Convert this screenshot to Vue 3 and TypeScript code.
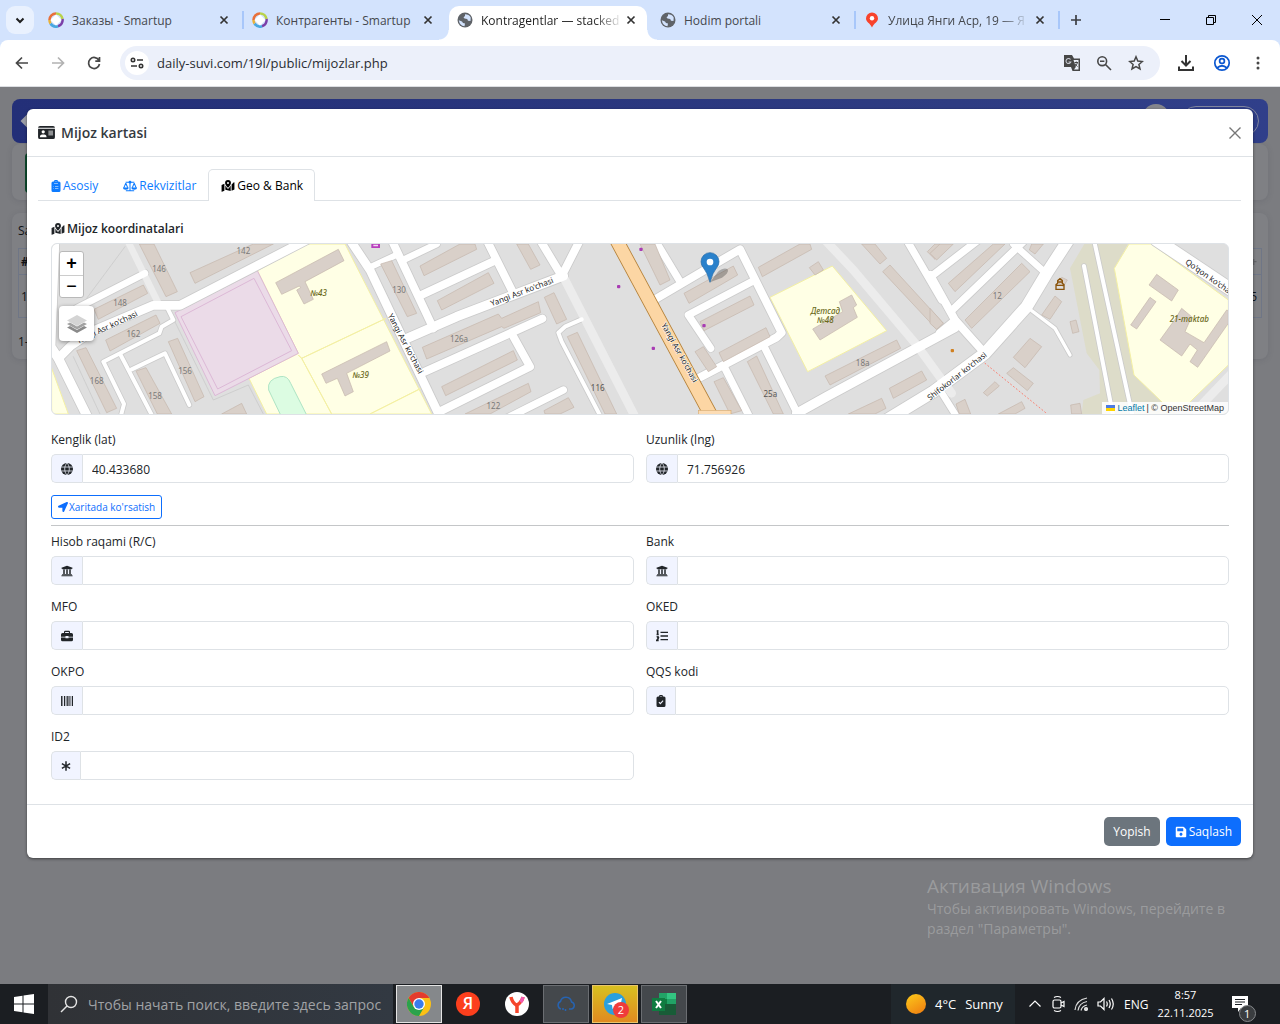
<script setup lang="ts">
import { ref } from 'vue'

interface Icon { w: number; d?: string; cut?: string; line?: string }

const icons: Record<string, Icon> = {
  idCard: { w: 576, d: 'M0 96a64 64 0 0 1 64-64h448a64 64 0 0 1 64 64zM0 128h576v288a64 64 0 0 1-64 64H64a64 64 0 0 1-64-64zM176 176a56 56 0 1 0 0 112a56 56 0 1 0 0-112zM64 416h224a90 90 0 0 0-80-96h-64a90 90 0 0 0-80 96zM352 192v32h160v-32zM352 256v32h160v-32zM352 320v32h160v-32z' },
  clipboardList: { w: 384, d: 'M64 64h48a80 80 0 0 1 160 0h48a64 64 0 0 1 64 64v320a64 64 0 0 1-64 64H64a64 64 0 0 1-64-64V128a64 64 0 0 1 64-64zM192 44a20 20 0 1 0 0 40a20 20 0 1 0 0-40zM110 140v20h164v-20zM84 262v24h24v-24zM150 264v20h144v-20zM84 362v24h24v-24zM150 364v20h144v-20z' },
  scale: { w: 640, d: 'M0 330h256a128 100 0 0 1-256 0zM384 330h256a128 100 0 0 1-256 0zM320 16a64 64 0 1 0 0 128a64 64 0 1 0 0-128z', line: 'M320 90V480M130 474H510M120 84H520M128 130L36 340M128 130L220 340M512 130L420 340M512 130L604 340' },
  mapPin: { w: 576, d: 'M14 216l120-52v290L30 500Q14 506 14 486zM562 100v310L442 462V190l96-90q24-10 24 10zM174 230q50 90 92 134q22 22 44 0q42-44 92-134v240l-228-50zM288 0a126 126 0 0 1 126 126c0 56-82 158-114 196q-12 14-24 0C244 284 162 182 162 126A126 126 0 0 1 288 0zM288 84a42 42 0 1 0 0 84a42 42 0 1 0 0-84z' },
  globe: { w: 512, d: 'M256 0a256 256 0 1 0 0 512a256 256 0 1 0 0-512z', cut: 'M10 172H502M10 340H502M256 0c-130 130-130 382 0 512M256 0c130 130 130 382 0 512' },
  bank: { w: 512, d: 'M496 128v16a8 8 0 0 1-8 8h-24v12c0 6.627-5.373 12-12 12H60c-6.627 0-12-5.373-12-12v-12H24a8 8 0 0 1-8-8v-16a8 8 0 0 1 4.941-7.392l232-88a7.996 7.996 0 0 1 6.118 0l232 88A8 8 0 0 1 496 128zm-24 304H40c-13.255 0-24 10.745-24 24v16a8 8 0 0 0 8 8h464a8 8 0 0 0 8-8v-16c0-13.255-10.745-24-24-24zM96 192v192H60c-6.627 0-12 5.373-12 12v20h416v-20c0-6.627-5.373-12-12-12h-36V192h-64v192h-64V192h-64v192h-64V192H96z' },
  briefcase: { w: 512, d: 'M176 32h160a48 48 0 0 1 48 48v48h64a64 64 0 0 1 64 64v96H320v-32H192v32H0v-96a64 64 0 0 1 64-64h64V80a48 48 0 0 1 48-48zM176 80v48h160V80zM0 320h192v32h128v-32h192v96a64 64 0 0 1-64 64H64a64 64 0 0 1-64-64z' },
  listOl: { w: 512, d: 'M192 72h320v56H192zM192 228h320v56H192zM192 384h320v56H192z', line: 'M30 60L70 40V190M24 194H116M30 310q60-40 76 4q6 30-76 130h84' },
  barcode: { w: 512, d: 'M0 40h40v432H0zM64 40h24v432H64zM128 40h48v432h-48zM208 40h24v432h-24zM264 40h56v432h-56zM352 40h24v432h-24zM408 40h24v432h-24zM464 40h48v432h-48z' },
  clipboardCheck: { w: 384, d: 'M64 64h48a80 80 0 0 1 160 0h48a64 64 0 0 1 64 64v320a64 64 0 0 1-64 64H64a64 64 0 0 1-64-64V128a64 64 0 0 1 64-64zM192 40a24 24 0 1 0 0 48a24 24 0 1 0 0-48z', cut: 'M104 306l60 60 118-124' },
  asterisk: { w: 448, line: 'M224 40V472M40 150L408 362M408 150L40 362' },
  arrow: { w: 512, d: 'M444.52 3.52L28.74 195.42c-47.97 22.39-31.98 92.75 19.19 92.75h175.91v175.91c0 51.17 70.36 67.17 92.75 19.19l191.9-415.78c15.99-38.39-25.59-79.97-63.97-63.97z' },
  save: { w: 448, d: 'M433.941 129.941l-83.882-83.882A48 48 0 0 0 316.118 32H48C21.49 32 0 53.49 0 80v352c0 26.51 21.49 48 48 48h352c26.51 0 48-21.49 48-48V163.882a48 48 0 0 0-14.059-33.941zM224 416c-35.346 0-64-28.654-64-64 0-35.346 28.654-64 64-64s64 28.654 64 64c0 35.346-28.654 64-64 64zm96-304.52V212c0 6.627-5.373 12-12 12H76c-6.627 0-12-5.373-12-12V108c0-6.627 5.373-12 12-12h228.52c3.183 0 6.235 1.264 8.485 3.515l3.48 3.48A11.996 11.996 0 0 1 320 111.48z' },
}

const browserTabs = [
  { title: 'Заказы - Smartup', icon: 'ring', active: false, sep: true },
  { title: 'Контрагенты - Smartup', icon: 'ring', active: false, sep: false },
  { title: 'Kontragentlar — stacked', icon: 'world', active: true, sep: false },
  { title: 'Hodim portali', icon: 'world', active: false, sep: true },
  { title: 'Улица Янги Аср, 19 — Я', icon: 'pin', active: false, sep: true },
]

const cardTabs = [
  { key: 'main', label: 'Asosiy', icon: 'clipboardList' },
  { key: 'req', label: 'Rekvizitlar', icon: 'scale' },
  { key: 'geo', label: 'Geo & Bank', icon: 'mapPin' },
]
const currentTab = ref('geo')

const coords = ref([
  { id: 'lat', label: 'Kenglik (lat)', icon: 'globe', value: '40.433680' },
  { id: 'lng', label: 'Uzunlik (lng)', icon: 'globe', value: '71.756926' },
])
const bankFields = ref([
  { id: 'account', label: 'Hisob raqami (R/C)', icon: 'bank', value: '' },
  { id: 'bank', label: 'Bank', icon: 'bank', value: '' },
  { id: 'mfo', label: 'MFO', icon: 'briefcase', value: '' },
  { id: 'oked', label: 'OKED', icon: 'listOl', value: '' },
  { id: 'okpo', label: 'OKPO', icon: 'barcode', value: '' },
  { id: 'qqs', label: 'QQS kodi', icon: 'clipboardCheck', value: '' },
  { id: 'id2', label: 'ID2', icon: 'asterisk', value: '' },
])

/* Map tiles: every tile keeps its own origin; one pixel is three units. */
interface Road { p: string; w: number; kind?: string }
interface Label { t: string; x: number; y: number; r?: number; kind?: string }
interface Tile {
  dx: number
  areas: { p: string; kind: string }[]
  roads: Road[]
  houses: string[]
  labels: Label[]
  dots: { x: number; y: number; kind?: string }[]
}
const street = "Yangi Asr ko'chasi"
const tiles: Tile[] = [
  {
    dx: -6,
    areas: [
      { p: '622,92 770,12 885,12 1145,522 650,522 597,415 745,340', kind: 'school' },
      { p: '5,385 55,522 5,522', kind: 'school' },
      { p: '745,345 755,355 1008,235 755,355 845,522 755,355', kind: 'school' },
      { p: '960,522 1112,445 1112,446', kind: 'school' },
      { p: '375,218 622,92 745,340 495,467', kind: 'court' },
      { p: '393,230 612,115 725,332 503,447', kind: 'court' },
    ],
    roads: [
      { p: '225,20 110,175', w: 1, kind: 'thin' },
      { p: '360,215 490,480 595,435 640,522', w: 1, kind: 'thin' },
      { p: '70,350 150,522', w: 1, kind: 'thin' },
      { p: '232,0 325,190', w: 20, kind: 'path' },
      { p: '14,0 2,320 25,355 112,530', w: 28 },
      { p: '25,355 62,318 130,272 310,196 390,196 770,0', w: 26 },
      { p: '80,205 285,100', w: 20 },
      { p: '350,200 370,240 335,260 328,280 160,365 222,492 212,530', w: 12 },
      { p: '212,345 308,530', w: 12 },
      { p: '245,388 345,340 418,495', w: 12 },
    ],
    houses: [
      '268,12 312,12 382,155 348,170', '420,98 610,12 670,12 435,130', '132,208 280,135 293,160 145,238',
      '167,300 318,225 330,250 180,333', '80,332 108,323 200,505 170,518', '258,393 288,383 365,522 322,522',
      '355,305 383,295 462,470 435,485', '515,522 575,490 590,522',
      '677,128 865,28 882,62 765,125 790,178 762,192 740,150 752,143 748,138 695,163',
      '815,402 1010,305 1020,333 890,400 910,455 885,468 862,415 828,430',
    ],
    labels: [
      { t: '146', x: 327, y: 87 }, { t: '142', x: 580, y: 33 }, { t: '148', x: 210, y: 188 }, { t: '162', x: 250, y: 280 },
      { t: '168', x: 140, y: 423 }, { t: '158', x: 315, y: 466 }, { t: '156', x: 405, y: 392 },
      { t: '№43', x: 806, y: 158, kind: 'place' }, { t: '№39', x: 932, y: 403, kind: 'place' },
      { t: street, x: 170, y: 260, r: -25, kind: 'street' },
    ],
    dots: [],
  },
  {
    dx: 894,
    areas: [],
    roads: [
      { p: '640,110 855,530', w: 26, kind: 'path' },
      { p: '0,0 60,90 265,520', w: 26 },
      { p: '60,82 145,42', w: 18 },
      { p: '125,0 250,265', w: 24 },
      { p: '155,62 260,12', w: 20 },
      { p: '210,167 435,62', w: 24 },
      { p: '410,0 490,160', w: 24 },
      { p: '165,298 320,230 640,108', w: 28 },
      { p: '570,0 635,108 690,0', w: 24 },
      { p: '225,395 577,236', w: 24 },
      { p: '490,290 540,380 275,512', w: 24 },
      { p: '460,540 640,450', w: 22 },
      { p: '695,238 645,260 625,278 635,305 752,530', w: 12 },
    ],
    houses: [
      '92,72 125,62 200,220 172,230', '210,78 330,12 375,12 380,28 222,107', '262,182 415,98 432,130 275,210',
      '500,12 535,12 570,75 542,88', '217,322 445,222 455,235 565,185 572,218 462,265 455,260 230,357',
      '583,172 612,158 650,238 620,252', '275,440 490,332 502,360 287,467', '345,522 535,430 543,455 420,522',
      '652,290 682,277 800,522 765,522', '582,512 655,473 672,502 630,522 585,522',
    ],
    labels: [
      { t: '130', x: 147, y: 150 }, { t: '126a', x: 327, y: 296 }, { t: '122', x: 430, y: 496 }, { t: '116', x: 743, y: 442, kind: 'dark' },
      { t: street, x: 515, y: 154, r: -21, kind: 'street' }, { t: street, x: 168, y: 310, r: 62, kind: 'street' },
    ],
    dots: [{ x: 806, y: 140 }],
  },
  {
    dx: 1764,
    areas: [{ p: '390,172 577,78 740,272 503,395', kind: 'school' }],
    roads: [
      { p: '555,0 640,90 830,315 935,460', w: 26, kind: 'path' },
      { p: '45,0 122,128', w: 22 },
      { p: '50,175 300,28 425,278 410,292 180,412', w: 24 },
      { p: '345,120 145,225 212,325', w: 22 },
      { p: '375,325 472,520', w: 22 },
      { p: '255,385 328,530', w: 22 },
      { p: '800,0 905,180', w: 22 },
      { p: '470,520 560,470 945,262', w: 28 },
      { p: '-77,-12 215,530', w: 38, kind: 'main' },
    ],
    houses: [
      '0,12 45,12 90,120 60,135', '132,160 280,78 293,105 147,190', '180,245 330,168 342,195 192,272',
      '237,338 378,263 390,290 250,365', '165,335 190,320 230,380 205,395', '222,425 250,413 305,512 270,522',
      '322,365 350,348 430,522 400,522', '355,82 480,12 510,12 515,28 367,110', '508,83 535,65 550,90 525,105',
      '518,267 608,215 598,185 635,165 650,195 640,203 652,232 540,300', '555,408 770,300 782,325 570,435',
      '748,445 845,393 860,420 760,475', '625,522 725,475 738,505 705,522', '665,12 705,12 740,55 720,72',
      '728,95 750,75 910,250 890,268', '862,35 885,12 920,12 885,58',
    ],
    labels: [
      { t: 'Детсад', x: 556, y: 213, kind: 'place' }, { t: '№48', x: 556, y: 240, kind: 'place' },
      { t: '18a', x: 668, y: 368 }, { t: '25a', x: 391, y: 461, kind: 'dark' },
      { t: street, x: 120, y: 337, r: 61, kind: 'street' },
    ],
    dots: [{ x: 3, y: 28 }, { x: 192, y: 257 }, { x: 40, y: 325 }],
  },
  {
    dx: 2634,
    areas: [
      { p: '470,0 600,0 555,85 612,405 740,522 455,522 460,480 510,460 508,390 470,340 420,85', kind: 'grass' },
      { p: '597,12 665,12 895,180 895,375 760,505 700,490 612,405 553,85', kind: 'school' },
    ],
    roads: [
      { p: '165,370 352,522', w: 2, kind: 'foot' },
      { p: '800,510 905,400', w: 26, kind: 'path' },
      { p: '462,78 550,530', w: 12 },
      { p: '492,0 608,530', w: 12 },
      { p: '0,112 145,0', w: 22 },
      { p: '65,212 280,5', w: 22 },
      { p: '250,12 350,102', w: 20 },
      { p: '0,105 75,240 160,335', w: 24 },
      { p: '75,243 30,280', w: 26 },
      { p: '305,212 375,265 420,345', w: 10 },
      { p: '30,450 80,530', w: 20 },
      { p: '-130,540 10,455 165,340 290,200 350,100 415,0', w: 36 },
      { p: '680,0 920,160', w: 38 },
    ],
    houses: [
      '0,40 30,12 70,12 20,60', '55,130 190,12 225,12 75,155', '305,12 340,12 315,42 298,30', '105,240 275,70 300,95 125,265',
      '335,225 375,168 395,185 360,238', '395,112 412,120 400,140 388,132', '420,245 438,240 447,275 428,280',
      '250,352 300,295 335,320 285,383', '230,400 250,383 310,430 292,452', '160,458 195,425 208,438 172,468',
      '78,492 105,478 122,522 88,522', '205,522 275,485 285,505 255,522', '422,495 450,490 455,522 425,522',
      '657,135 680,103 745,150 725,183', '602,255 660,172 678,185 620,267',
      '690,300 735,238 755,205 785,230 765,275 822,308 890,210 895,212 895,250 803,382 780,365 802,330 780,312 755,348',
      '0,205 40,250 20,268 0,250',
    ],
    labels: [
      { t: '12', x: 202, y: 168 }, { t: '21-maktab', x: 778, y: 237, kind: 'place' },
      { t: "Shifokorlar ko'chasi", x: 80, y: 407, r: -38, kind: 'street' }, { t: "Qo'qon ko'chasi", x: 842, y: 112, r: 35, kind: 'street' },
    ],
    dots: [{ x: 67, y: 332, kind: 'orange' }],
  },
]
</script>

<template>
  <div class="screen">
    <header class="tabstrip">
      <button class="tab-search" aria-label="Search tabs">
        <svg width="12" height="12" viewBox="0 0 12 12"><path d="M2.500 4.500L6 8l3.500-3.500" fill="none" stroke="#1f1f1f" stroke-width="2" /></svg>
      </button>
      <div v-for="t in browserTabs" :key="t.title" class="btab" :class="{ active: t.active, sep: t.sep }">
        <svg v-if="t.icon === 'ring'" class="fav" viewBox="0 0 16 16" fill="none" stroke-width="2.600">
          <path d="M1.500 8A6.500 6.500 0 0 1 8 1.500" stroke="#e8703a" /><path d="M8 1.500A6.500 6.500 0 0 1 14.500 7" stroke="#b9d24a" /><path d="M14.500 7A6.500 6.500 0 0 1 10 14.200" stroke="#7b3fa8" /><path d="M10 14.200A6.500 6.500 0 0 1 2.500 11.500" stroke="#4aa8e0" /><path d="M2.500 11.500A6.500 6.500 0 0 1 1.500 8" stroke="#e8b13a" />
          <path d="M8 2.500L13.500 8L8 13.500L2.500 8Z" fill="#fff" />
        </svg>
        <svg v-else-if="t.icon === 'world'" class="fav" viewBox="0 0 16 16">
          <circle cx="8" cy="8" r="7.500" fill="#5f6368" />
          <path d="M1.800 8.300l3.200 1.200 1 1.500 2 .5-.5 2.800q-4.800-.4-5.700-6zM8 2.200q4 0 5.700 3.300l-.2 3.500-2.500-.2-.8-1.800-2.700-.4-1-1.300 1.500-1.200z" fill="#d3e3fd" />
        </svg>
        <svg v-else class="fav" viewBox="0 0 16 16"><path d="M8 .500a6 6 0 0 1 6 6c0 3.500-4 4.500-6 9c-2-4.500-6-5.500-6-9a6 6 0 0 1 6-6z" fill="#f8432c" /><circle cx="8" cy="6.300" r="2.200" fill="#fff" /></svg>
        <span class="btitle" :class="{ fade: t.title.length > 21 }">{{ t.title }}</span>
        <button class="bclose" aria-label="Close tab"><svg width="10" height="10" viewBox="0 0 10 10"><path d="M1.500 1.500l7 7M8.500 1.500l-7 7" stroke="#333" stroke-width="1.700" /></svg></button>
      </div>
      <button class="plain" aria-label="New tab"><svg width="12" height="12" viewBox="0 0 12 12"><path d="M6 1v10M1 6h10" stroke="#3c3f43" stroke-width="1.700" /></svg></button>
      <div class="winctl">
        <button aria-label="Minimize"><svg width="12" height="12" viewBox="0 0 12 12"><path d="M1 5.500h10" stroke="#000" /></svg></button>
        <button aria-label="Restore"><svg width="12" height="12" viewBox="0 0 12 12" fill="none" stroke="#000"><path d="M1.500 3.500h7v7h-7zM3.500 3.500v-2h7v7h-2" /></svg></button>
        <button aria-label="Close"><svg width="12" height="12" viewBox="0 0 12 12"><path d="M1 1l10 10M11 1L1 11" stroke="#000" /></svg></button>
      </div>
    </header>

    <div class="toolbar">
      <button class="tool" aria-label="Back"><svg width="16" height="16" viewBox="0 0 16 16" fill="none" stroke="#474747" stroke-width="1.700"><path d="M14 8H3M8 2.500L2.500 8L8 13.500" /></svg></button>
      <button class="tool" aria-label="Forward"><svg width="16" height="16" viewBox="0 0 16 16" fill="none" stroke="#b2b2b2" stroke-width="1.700"><path d="M2 8h11M8 2.500L13.500 8L8 13.500" /></svg></button>
      <button class="tool" aria-label="Reload"><svg width="16" height="16" viewBox="0 0 16 16" fill="none" stroke="#474747" stroke-width="1.700"><path d="M13 5.500A5.500 5.500 0 1 0 13.500 9M13.500 2v4.200H9.300" /></svg></button>
      <div class="omnibox">
        <button class="site" aria-label="Site information"><svg width="14" height="12" viewBox="0 0 14 12" fill="none" stroke="#333" stroke-width="1.600"><circle cx="3" cy="3" r="1.700" /><path d="M7 3h6M1 9h6" /><circle cx="11" cy="9" r="1.700" /></svg></button>
        <input class="url" aria-label="Address" value="daily-suvi.com/19l/public/mijozlar.php" />
        <button class="otool" aria-label="Translate"><svg width="18" height="18" viewBox="0 0 18 18"><path d="M1 1h8l2 3.500h6V17H9.500L8 13H1z" fill="#474747" /><path d="M10.500 6H15.500V15.500H11L12.800 13z" fill="#edf1fa" /><path d="M7.500 5.500a2.500 2.500 0 1 0 .3 2.500H5.500" fill="none" stroke="#c9ccd4" stroke-width="1.100" /><path d="M11.500 8.500h3.500M13.300 7.500v1M14.500 8.500q-.5 2.500-2.700 4M12 9.500q1 2 2.500 3" fill="none" stroke="#474747" /></svg></button>
        <button class="otool" aria-label="Zoom"><svg width="16" height="16" viewBox="0 0 16 16" fill="none" stroke="#474747" stroke-width="1.600"><circle cx="6.200" cy="6.200" r="4.400" /><path d="M9.500 9.500L15 15M4 6.200h4.400" /></svg></button>
        <button class="otool" aria-label="Bookmark"><svg width="16" height="16" viewBox="0 0 16 16" fill="none" stroke="#474747" stroke-width="1.500"><path d="M8 1.800l1.800 4.300 4.600.4-3.500 3 1.100 4.500L8 11.600 4 14l1.100-4.500-3.500-3 4.600-.4z" /></svg></button>
      </div>
      <button class="tool" aria-label="Downloads"><svg width="18" height="18" viewBox="0 0 18 18" fill="none" stroke="#333" stroke-width="2"><path d="M9 1v10M4.500 7L9 11.500L13.500 7M2 12.500V16h14v-3.500" /></svg></button>
      <button class="tool" aria-label="Profile"><svg width="18" height="18" viewBox="0 0 18 18" fill="none" stroke="#0b57d0" stroke-width="1.700"><circle cx="9" cy="9" r="7.200" /><circle cx="9" cy="7" r="2.400" /><path d="M4 14q5-4.500 10 0" /></svg></button>
      <button class="tool" aria-label="Menu"><svg width="4" height="16" viewBox="0 0 4 16" fill="#474747"><circle cx="2" cy="3" r="1.500" /><circle cx="2" cy="8" r="1.500" /><circle cx="2" cy="13" r="1.500" /></svg></button>
    </div>

    <main class="page">
      <div class="behind" aria-hidden="true">
        <div class="appbar"><span class="diamond"></span><span class="ava"></span><span class="pill"></span></div>
        <div class="pcard first"><span class="green"></span></div>
        <div class="pcard second">
          <p>Sa</p>
          <div class="grid"><div class="r head"><span>#</span><span>+</span></div><div class="r"><span>1</span><span>5</span></div></div>
          <p class="count">1-</p>
        </div>
      </div>

      <section class="modal" role="dialog" aria-labelledby="card-title">
        <header class="mhead">
          <svg class="ic big" :viewBox="`0 0 ${icons.idCard.w} 512`"><path fill-rule="evenodd" :d="icons.idCard.d" /></svg>
          <h1 id="card-title">Mijoz kartasi</h1>
          <button class="mclose" aria-label="Close"><svg width="12" height="12" viewBox="0 0 12 12"><path d="M.500 .500l11 11M11.500 .500l-11 11" stroke="#777" stroke-width="1.400" /></svg></button>
        </header>

        <div class="mbody">
          <nav class="tabs" role="tablist">
            <button v-for="t in cardTabs" :key="t.key" class="tab" :class="{ on: t.key === currentTab }" role="tab" :aria-selected="t.key === currentTab" @click="currentTab = t.key">
              <svg class="ic" :viewBox="`0 0 ${icons[t.icon].w} 512`" :class="{ slim: icons[t.icon].w < 448, wide: icons[t.icon].w > 512 }"><path fill-rule="evenodd" :d="icons[t.icon].d" /><path v-if="icons[t.icon].line" class="line thin" :d="icons[t.icon].line" /></svg>
              <span>{{ t.label }}</span>
            </button>
          </nav>

          <div class="pane">
            <h2><svg class="ic wide" viewBox="0 0 576 512"><path fill-rule="evenodd" :d="icons.mapPin.d" /></svg>Mijoz koordinatalari</h2>
            <div class="map">
              <svg class="mapart" viewBox="0 0 3528 510" preserveAspectRatio="xMidYMid slice">
                <g v-for="t in tiles" :key="'a' + t.dx" :transform="`translate(${t.dx} -12)`">
                  <polygon v-for="a in t.areas" :key="a.p" :points="a.p" :class="a.kind" />
                </g>
                <path transform="translate(-6 -12)" class="pitch" d="M692 525L656 450Q650 418 690 410Q712 405 722 430L770 525z" />
                <g v-for="t in tiles" :key="'c' + t.dx" :transform="`translate(${t.dx} -12)`">
                  <polyline v-for="r in t.roads.filter((x) => !x.kind)" :key="r.p" :points="r.p" class="casing" :stroke-width="r.w + 5" />
                </g>
                <g v-for="t in tiles" :key="'r' + t.dx" :transform="`translate(${t.dx} -12)`">
                  <polyline v-for="r in t.roads.filter((x) => x.kind !== 'main')" :key="r.p" :points="r.p" class="road" :class="r.kind" :stroke-width="r.w" />
                </g>
                <g v-for="t in tiles" :key="'h' + t.dx" :transform="`translate(${t.dx} -12)`">
                  <polygon v-for="h in t.houses" :key="h" :points="h" class="house" />
                  <template v-for="r in t.roads" :key="r.p">
                    <polyline v-if="r.kind === 'main'" :points="r.p" class="main-casing" :stroke-width="r.w + 5" />
                    <polyline v-if="r.kind === 'main'" :points="r.p" class="main" :stroke-width="r.w" />
                  </template>
                  <rect v-for="d in t.dots" :key="d.x" :x="d.x - 5" :y="d.y - 5" width="10" height="10" rx="3" class="dot" :class="d.kind" />
                </g>
                <rect x="1939" y="499" width="98" height="14" fill="#fcdcb4" stroke="#d8ad74" stroke-width="2" />
                <path d="M958 0h26v12h-26z" fill="#b83fbd" /><path d="M964 2h14v5h-14z" fill="#f3d7f4" />
                <path d="M3012 136v-14l5-4v-8l7-6 7 6v8l5 4v14z" fill="none" stroke="#8a540c" stroke-width="4" /><path d="M3012 124h24M3018 114h12" stroke="#8a540c" stroke-width="4" />
                <g v-for="t in tiles" :key="'l' + t.dx" :transform="`translate(${t.dx} -12)`">
                  <text v-for="l in t.labels" :key="l.t + l.x" :class="l.kind" :transform="`translate(${l.x} ${l.y}) rotate(${l.r || 0})`" dy="10">{{ l.t }}</text>
                </g>
                <g transform="translate(1974 115)">
                  <path d="M0 0L24-32Q44-48 54-38Q56-28 36-14z" fill="#000" opacity=".25" />
                  <path d="M0 0Q-8-30-20-44A27 27 0 0 1-27-62A27 27 0 0 1 27-62A27 27 0 0 1 20-44Q8-30 0 0z" fill="#2a81cb" stroke="#2268a5" stroke-width="2" /><circle cy="-61" r="10" fill="#fff" />
                </g>
              </svg>
              <div class="zoom"><button aria-label="Zoom in">+</button><button aria-label="Zoom out">−</button></div>
              <button class="layers" aria-label="Layers">
                <svg width="22" height="22" viewBox="0 0 22 22"><path d="M1 14.500l10 5.500 10-5.500-3-1.500-7 4-7-4z" fill="#8a8a8a" /><path d="M1 11l10 5.500L21 11l-3-1.500-7 4-7-4z" fill="#a2a2a2" /><path d="M1 7.500L11 2l10 5.500L11 13z" fill="#d4d4d4" /></svg>
              </button>
              <div class="credit">
                <svg width="9" height="6" viewBox="0 0 9 6"><path d="M0 0h9v3H0z" fill="#4c7be1" /><path d="M0 3h9v3H0z" fill="#ffd500" /></svg>
                <a href="#">Leaflet</a><span>| © OpenStreetMap</span>
              </div>
            </div>

            <div class="fields geo">
              <div v-for="f in coords" :key="f.id" class="field">
                <label :for="f.id">{{ f.label }}</label>
                <div class="group">
                  <span class="addon"><svg class="ic" viewBox="0 0 512 512"><path :d="icons.globe.d" /><path class="cut" :d="icons.globe.cut" /></svg></span>
                  <input :id="f.id" v-model="f.value" type="text" />
                </div>
              </div>
            </div>
            <button class="show"><svg class="ic" viewBox="0 0 512 512"><path :d="icons.arrow.d" /></svg>Xaritada ko'rsatish</button>
            <hr />
            <div class="fields">
              <div v-for="f in bankFields" :key="f.id" class="field">
                <label :for="f.id">{{ f.label }}</label>
                <div class="group">
                  <span class="addon">
                    <svg class="ic" :class="{ slim: icons[f.icon].w < 512 }" :viewBox="`0 0 ${icons[f.icon].w} 512`">
                      <path v-if="icons[f.icon].d" fill-rule="evenodd" :d="icons[f.icon].d" />
                      <path v-if="icons[f.icon].cut" class="cut fat" :d="icons[f.icon].cut" />
                      <path v-if="icons[f.icon].line" class="line" :d="icons[f.icon].line" />
                    </svg>
                  </span>
                  <input :id="f.id" v-model="f.value" type="text" />
                </div>
              </div>
            </div>
          </div>
        </div>

        <footer class="mfoot">
          <button class="btn gray">Yopish</button>
          <button class="btn blue"><svg class="ic" viewBox="0 0 448 512"><path :d="icons.save.d" /></svg>Saqlash</button>
        </footer>
      </section>

      <div class="watermark"><strong>Активация Windows</strong><span>Чтобы активировать Windows, перейдите в<br />раздел "Параметры".</span></div>
    </main>

    <footer class="taskbar">
      <button class="start" aria-label="Start"><svg width="20" height="20" viewBox="0 0 20 20" fill="#fff"><path d="M0 3l8.500-1.200v7.700H0zM9.500 1.600L20 0v9.500H9.500zM0 10.500h8.500v7.700L0 17zM9.500 10.500H20V20L9.500 18.400z" /></svg></button>
      <div class="search">
        <svg width="18" height="18" viewBox="0 0 18 18" fill="none" stroke="#e4e4e4" stroke-width="1.400"><circle cx="11" cy="7" r="5.500" /><path d="M7 11L1 17" /></svg>
        <input aria-label="Поиск" placeholder="Чтобы начать поиск, введите здесь запрос" />
      </div>
      <div class="apps">
        <button class="app current" aria-label="Chrome">
          <svg width="24" height="24" viewBox="0 0 24 24"><circle cx="12" cy="12" r="12" fill="#fbc116" /><path d="M1.600 6A12 12 0 0 1 22.400 6H12L7 15z" fill="#e33b2e" /><path d="M1.600 6A12 12 0 0 0 12 24L17.200 15 12 17 6.800 15z" fill="#2ba24c" /><circle cx="12" cy="12" r="6" fill="#fff" /><circle cx="12" cy="12" r="4.700" fill="#3a7cec" /></svg>
        </button>
        <button class="app" aria-label="Yandex"><span class="round red">Я</span></button>
        <button class="app" aria-label="Yandex Browser"><svg width="24" height="24" viewBox="0 0 24 24" fill="none" stroke-width="3.500"><circle cx="12" cy="12" r="12" fill="#fff" /><path d="M6 5q1 5.500 6 8.500" stroke="#f5452c" /><path d="M18 5q-1 5-6 8v8" stroke="#f5452c" /><path d="M18 5q-.5 3-2.500 5" stroke="#f25bb0" /></svg></button>
        <button class="app open" aria-label="Cloud"><svg width="20" height="18" viewBox="0 0 20 18" fill="none" stroke="#2763b0" stroke-width="1.500"><path d="M5 14a4 4 0 0 1-.5-7.500A5.600 5.600 0 0 1 15.500 7A3.600 3.600 0 0 1 15.500 14H13M6 14h2M9.500 14v2" /></svg></button>
        <button class="app alert" aria-label="Telegram">
          <svg width="24" height="24" viewBox="0 0 24 24"><circle cx="12" cy="12" r="11" fill="#2ba0dc" /><path d="M4 12L19 6l-2.500 12-4.500-3.500-2.500 2.500-.5-4z" fill="#fff" /></svg>
          <span class="badge">2</span>
        </button>
        <button class="app open" aria-label="Excel"><svg width="24" height="24" viewBox="0 0 24 24"><path d="M7 1h8v6H7z" fill="#21a366" /><path d="M15 1h9v6h-9z" fill="#33c481" /><path d="M7 7h8v10H7z" fill="#107c41" /><path d="M15 7h9v5h-9z" fill="#21a366" /><path d="M7 12h17v11H7z" fill="#185c37" /><path d="M0 6h13v13H0z" fill="#107c41" /><path d="M4 9l5 7M9 9l-5 7" stroke="#fff" stroke-width="2" /></svg></button>
      </div>
      <div class="weather"><span class="sun"></span><span>4°C</span><span>Sunny</span></div>
      <div class="tray">
        <svg width="14" height="10" viewBox="0 0 14 10" fill="none" stroke="#fff" stroke-width="1.200"><path d="M1.500 7.500L7 2l5.500 5.500" /></svg>
        <svg width="14" height="18" viewBox="0 0 14 18" fill="none" stroke="#fff" stroke-width="1.200"><rect x="2" y="5" width="8" height="8" rx="1.500" /><path d="M10 8l3-1.500v5L10 10M3 2.500q3.500-2 7 0M3 15.500q3.500 2 7 0" /></svg>
        <svg width="14" height="14" viewBox="0 0 14 14" fill="none" stroke="#ddd" stroke-width="1.200"><path d="M1 13Q2 3 13 1M4 13.500Q5 6 13 4.500M7 13.500Q8 9 13 8" /><circle cx="12" cy="12" r="1.500" fill="#ddd" /></svg>
        <svg width="18" height="14" viewBox="0 0 18 14" fill="none" stroke="#fff" stroke-width="1.200"><path d="M1 5h2.500L7 1.500v11L3.500 9H1zM9.500 4.500q1.500 2.500 0 5M12 3q2.500 4 0 8M14.500 1.500q3.500 5.500 0 11" /></svg>
        <span class="lang">ENG</span>
        <time class="clock">8:57<br />22.11.2025</time>
        <span class="note"><svg width="18" height="18" viewBox="0 0 18 18"><path d="M1 1h16v12H10l-3 4v-4H1z" fill="#fff" /><path d="M4 4.500h10M4 7h10M4 9.500h7" stroke="#1b1e22" /></svg><span class="count1">1</span></span>
      </div>
    </footer>
  </div>
</template>

<style>
body { margin: 0; }
</style>

<style scoped>
* { box-sizing: border-box; }
.screen { min-height: 100vh; display: flex; flex-direction: column; font-family: "Open Sans", "Noto Sans", sans-serif; font-size: 12px; color: #212529; }
button { font: inherit; color: inherit; border: 0; background: none; padding: 0; display: flex; align-items: center; justify-content: center; }
input { font: inherit; color: inherit; min-width: 0; outline: 0; }
h1, h2, p { margin: 0; }

.tabstrip { height: 40px; background: #d3e3fd; display: flex; align-items: center; padding-left: 6px; position: relative; z-index: 1; }
.tab-search { width: 28px; height: 28px; border-radius: 9px; background: #e9f1fe; margin-right: 6px; flex: none; }
.btab { flex: 0 1 204px; min-width: 0; height: 28px; display: flex; align-items: center; padding: 0 10px 0 8px; border-right: 2px solid transparent; }
.btab.sep { border-image: linear-gradient(#d3e3fd 6px, #a8c7fa 6px, #a8c7fa 22px, #d3e3fd 22px) 1; border-width: 0 2px 0 0; border-style: solid; }
.btab.active { position: relative; height: 34px; align-self: flex-end; background: #fff; border-radius: 10px 10px 0 0; padding: 0 8px 6px; border-right: 0; margin-left: 1px; margin-right: 5px; flex-basis: 198px; }
.btab.active::before, .btab.active::after { content: ""; position: absolute; bottom: 0; width: 10px; height: 10px; }
.btab.active::before { left: -10px; background: radial-gradient(circle at 0 0, #d3e3fd 9px, #fff 10px); }
.btab.active::after { right: -10px; background: radial-gradient(circle at 100% 0, #d3e3fd 9px, #fff 10px); }
.fav { width: 16px; height: 16px; flex: none; margin-right: 8px; }
.btitle { flex: 1; min-width: 0; overflow: hidden; white-space: nowrap; color: #45484d; }
.btitle.fade { -webkit-mask-image: linear-gradient(90deg, #000 112px, transparent 142px); mask-image: linear-gradient(90deg, #000 112px, transparent 142px); }
.active .btitle { color: #1f1f1f; }
.bclose { width: 16px; height: 16px; flex: none; }
.plain { width: 32px; height: 28px; flex: none; }
.winctl { margin-left: auto; display: flex; flex: none; align-self: stretch; }
.winctl button { width: 46px; }

.toolbar { height: 47px; background: #fff; border-bottom: 1px solid #dcdee2; display: flex; align-items: center; padding: 0 4px; border-radius: 8px 8px 0 0; box-shadow: 0 -10px 0 #d3e3fd; position: relative; }
.tool { width: 36px; height: 36px; flex: none; }
.omnibox { flex: 1; min-width: 0; height: 34px; margin: 0 8px; border-radius: 17px; background: #ecf0fa; display: flex; align-items: center; padding: 0 8px 0 5px; }
.site { width: 24px; height: 24px; border-radius: 50%; background: #fff; flex: none; margin-right: 8px; }
.url { flex: 1; border: 0; background: none; padding: 0; font-size: 13px; color: #2a2d32; }
.otool { width: 32px; height: 28px; flex: none; }

.page { flex: 1; position: relative; background: #7b7c80; padding: 22px 27px 126px; overflow: hidden; }
.behind { position: absolute; inset: 12px 12px auto; }
.appbar { height: 44px; border-radius: 8px; background: linear-gradient(90deg, #232f78, #2e3c82 75%, #303f8a); display: flex; align-items: center; padding: 0 9px 0 11px; }
.diamond { width: 12px; height: 12px; background: #9b9da6; transform: rotate(45deg); }
.ava { width: 30px; height: 34px; border-radius: 50%; background: #85868c; margin-left: auto; margin-right: 10px; }
.pill { width: 78px; height: 30px; border: 1px solid #80859e; border-radius: 15px; }
.pcard { background: #7f8084; border-radius: 8px; box-shadow: 0 1px 6px rgba(40, 42, 60, .12); }
.first { height: 56px; padding: 9px 13px; margin-top: 1px; }
.green { display: block; width: 40px; height: 40px; border-radius: 4px; background: #0c4a2c; }
.second { margin-top: 13px; height: 146px; padding: 9px 6px 7px; color: #111317; }
.grid { margin-top: 9px; border: 1px solid #6f7686; }
.grid .r { display: flex; justify-content: space-between; height: 42px; align-items: center; padding: 0 4px 0 2px; }
.grid .head { height: 26px; border-bottom: 1px solid #6f7686; font-weight: 700; }
.grid .head span + span { opacity: .25; }
.count { margin-top: 15px; }

.modal { position: relative; background: #fff; border-radius: 6px; box-shadow: 0 1px 3px rgba(0, 0, 0, .5); }
.mhead { height: 48px; display: flex; align-items: center; padding: 0 12px 0 11px; border-bottom: 1px solid #dee2e6; }
.mhead h1 { font-size: 14px; font-weight: 600; line-height: 20px; flex: 1; margin-left: 6px; color: #343a40; }
.mclose { width: 12px; height: 12px; }
.ic { width: 12px; height: 12px; fill: currentColor; flex: none; }
.ic.big { width: 17px; height: 15px; }
.ic.wide { width: 14px; }
.ic.slim { width: 10px; }
.line { fill: none; stroke: currentColor; stroke-width: 68; }
.line.thin { stroke-width: 48; }
.cut { fill: none; stroke: #f1f4ff; stroke-width: 32; }
.cut.fat { stroke-width: 48; }
.mbody { padding: 12px 12px 24px 11px; }
.tabs { display: flex; border-bottom: 1px solid #dee2e6; }
.tab { height: 32px; padding: 0 11px 0 12px; gap: 2px; border: 1px solid transparent; border-bottom: 0; border-radius: 5px 5px 0 0; color: #0d7bff; margin-bottom: -1px; }
.tab.on { color: #000; background: #fff; border-color: #dee2e6; }
.pane { padding: 18px 12px 0 13px; }
h2 { font-size: 12px; font-weight: 600; line-height: 20px; display: flex; align-items: center; gap: 2px; margin-bottom: 4px; }
.map { position: relative; height: 172px; border: 1px solid #dee2e6; border-radius: 6px; overflow: hidden; background: #dfdfdf; }
.mapart { display: block; width: 100%; height: 170px; }
.school { fill: #ffffe5; stroke: #f4f0a4; stroke-width: 3; }
.court { fill: #ebdbe8; stroke: #dcb8d6; stroke-width: 3; }
.grass { fill: #dddcc9; }
.pitch { fill: #dcfce2; stroke: #aee4c4; stroke-width: 3; }
.casing, .road, .main, .main-casing { fill: none; stroke-linejoin: round; stroke-linecap: round; }
.casing { stroke: #cbcbcb; }
.road { stroke: #fff; }
.road.path { stroke: #ececec; }
.road.thin { stroke: #c6c6c6; stroke-width: 2; }
.road.foot { stroke: #fa8072; stroke-width: 3; stroke-dasharray: 3 8; }
.main { stroke: #fcd6a4; }
.main-casing { stroke: #b5823a; }
.house { fill: #d9d0c9; stroke: #c4b5aa; stroke-width: 2; }
.dot { fill: #a93cb4; }
.dot.orange { fill: #d08020; }
.mapart text { font-family: "Noto Sans", "Open Sans", sans-serif; font-size: 24px; fill: #7a7a7a; text-anchor: middle; }
.mapart text.dark { fill: #555; }
.mapart text.place { font-style: italic; fill: #6b6a1c; font-weight: 500; }
.mapart text.street { fill: #1c1c1c; stroke: #fff; stroke-width: 3; paint-order: stroke; }
.zoom { position: absolute; left: 7px; top: 7px; width: 25px; border: 1px solid #b9b9b9; border-radius: 3px; background: #fff; }
.zoom button { width: 23px; height: 23px; font: 700 18px "Liberation Sans", sans-serif; color: #000; }
.zoom button + button { border-top: 1px solid #ccc; height: 22px; font-weight: 400; }
.layers { position: absolute; left: 7px; top: 62px; width: 35px; height: 35px; background: #fff; border-radius: 4px; box-shadow: 0 1px 4px rgba(0, 0, 0, .4); }
.credit { position: absolute; right: 0; bottom: 0; height: 12px; background: rgba(255, 255, 255, .85); display: flex; align-items: center; gap: 2px; padding: 0 4px; font: 9px "Liberation Sans", sans-serif; color: #333; }
.credit a { color: #0078a8; text-decoration: none; }
.fields { display: grid; grid-template-columns: 1fr 1fr; gap: 12px; }
.geo { margin-top: 15px; }
.field label { display: block; line-height: 20px; margin-bottom: 4px; }
.group { display: flex; height: 29px; }
.addon { display: flex; align-items: center; padding: 0 9px; border: 1px solid #dee2e6; border-right: 0; border-radius: 5px 0 0 5px; background: #f1f4ff; }
.group input { flex: 1; border: 1px solid #dee2e6; border-radius: 0 5px 5px 0; padding: 2px 9px 0; background: #fff; }
.show { height: 24px; margin-top: 12px; padding: 0 6px; border: 1px solid #0d6efd; border-radius: 3px; color: #0d6efd; font-size: 10px; gap: 1px; }
.show .ic { width: 10px; height: 10px; }
hr { border: 0; border-top: 1px solid #c4c6c8; margin: 6px 0; }
.mfoot { border-top: 1px solid #dee2e6; padding: 12px; display: flex; justify-content: flex-end; gap: 6px; }
.btn { height: 29px; padding: 0 9px; border-radius: 5px; color: #fff; font-weight: 500; gap: 2px; }
.gray { background: #6c757d; }
.blue { background: #0d6efd; }

.watermark { position: absolute; right: 55px; bottom: 45px; color: #9a9b9d; display: flex; flex-direction: column; font-size: 14px; line-height: 20px; }
.watermark strong { font-size: 19px; font-weight: 400; line-height: 25px; }

.taskbar { height: 40px; background: #1b1e22; color: #fff; display: flex; align-items: center; }
.start { width: 48px; height: 40px; flex: none; }
.search { flex: 0 1 345px; min-width: 0; height: 40px; background: linear-gradient(90deg, #303236, #323942); display: flex; align-items: center; padding: 0 0 0 12px; gap: 10px; }
.search svg { flex: none; }
.search input { flex: 1; border: 0; background: none; padding: 0; font-size: 14px; }
.search input::placeholder { color: #a0a2a5; opacity: 1; }
.apps { display: flex; gap: 3px; margin-left: 3px; flex: none; }
.app { width: 46px; height: 38px; position: relative; }
.open { background: #44484c; border: 1px solid #6b6e72; }
.current { background: #85888b; border: 1px solid #e4e4e4; }
.alert { background: linear-gradient(#d8c020, #e08a20); border: 1px solid #eac56b; }
.round { width: 24px; height: 24px; border-radius: 50%; font-size: 16px; line-height: 23px; text-align: center; font-weight: 600; }
.red { background: #fc3f1d; }
.badge { position: absolute; right: 8px; bottom: 4px; width: 16px; height: 16px; border-radius: 50%; background: #f03b3b; font-size: 11px; line-height: 16px; text-align: center; }
.weather { margin-left: auto; width: 124px; height: 40px; background: #20272c; display: flex; align-items: center; gap: 9px; padding-left: 15px; font-size: 13px; flex: none; }
.sun { width: 20px; height: 20px; border-radius: 50%; background: linear-gradient(150deg, #fccb1b, #ef7a10); }
.tray { display: flex; align-items: center; gap: 9px; padding-left: 13px; width: 265px; flex: none; }
.lang { font-size: 12px; }
.clock { font-size: 11px; line-height: 18px; text-align: center; }
.note { position: relative; margin-left: 8px; display: flex; }
.count1 { position: absolute; right: -7px; bottom: -9px; width: 17px; height: 17px; border-radius: 50%; background: #3a3d40; border: 1px solid #85888b; font-size: 11px; line-height: 15px; text-align: center; }
</style>
